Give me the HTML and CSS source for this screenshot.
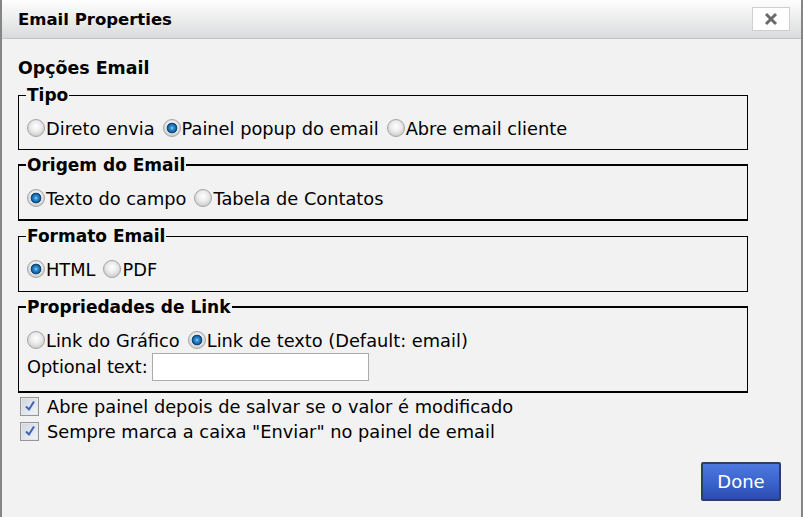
FILE: index.html
```html
<!DOCTYPE html>
<html>
<head>
<meta charset="utf-8">
<link rel="stylesheet" href="styles.css">
</head>
<body>
<div class="dialog">
  <div class="titlebar">
    <span class="title">Email Properties</span>
    <button class="close" type="button" aria-label="Close">
      <svg width="16" height="14" viewBox="0 0 16 14"><path d="M3 2 L13 12 M13 2 L3 12" stroke="#6a6a6a" stroke-width="3" stroke-linecap="butt"/></svg>
    </button>
  </div>
  <div class="content">
    <div class="heading">Opções Email</div>

    <fieldset class="group">
      <legend>Tipo</legend>
      <div class="row">
        <label class="opt"><span class="radio"></span>Direto envia</label>
        <label class="opt"><span class="radio on"></span>Painel popup do email</label>
        <label class="opt"><span class="radio"></span>Abre email cliente</label>
      </div>
    </fieldset>

    <fieldset class="group thick">
      <legend>Origem do Email</legend>
      <div class="row">
        <label class="opt"><span class="radio on"></span>Texto do campo</label>
        <label class="opt"><span class="radio"></span>Tabela de Contatos</label>
      </div>
    </fieldset>

    <fieldset class="group roomy">
      <legend>Formato Email</legend>
      <div class="row">
        <label class="opt"><span class="radio on"></span>HTML</label>
        <label class="opt"><span class="radio"></span>PDF</label>
      </div>
    </fieldset>

    <fieldset class="group thick last">
      <legend>Propriedades de Link</legend>
      <div class="row">
        <label class="opt"><span class="radio"></span>Link do Gráfico</label>
        <label class="opt"><span class="radio on"></span>Link de texto (Default: email)</label>
      </div>
      <div class="row text-row">
        <span class="lbl">Optional text:</span><span class="textbox"></span>
      </div>
    </fieldset>

    <label class="check"><span class="box"><svg width="14" height="14" viewBox="0 0 14 14"><path d="M3 7.5 L6 10.5 L11 2.5" fill="none" stroke="#3f62b8" stroke-width="2"/></svg></span>Abre painel depois de salvar se o valor é modificado</label>
    <label class="check"><span class="box"><svg width="14" height="14" viewBox="0 0 14 14"><path d="M3 7.5 L6 10.5 L11 2.5" fill="none" stroke="#3f62b8" stroke-width="2"/></svg></span>Sempre marca a caixa "Enviar" no painel de email</label>

    <div class="footer">
      <button class="done" type="button">Done</button>
    </div>
  </div>
</div>
</body>
</html>
```

FILE: styles.css
```css
html, body {
  margin: 0;
  padding: 0;
  background: #f2f2f2;
}

.dialog {
  width: 803px;
  height: 517px;
  box-sizing: border-box;
  border-left: 2px solid #858585;
  border-right: 2px solid #858585;
  background: #f2f2f2;
  font-family: "DejaVu Sans", Verdana, sans-serif;
  font-size: 17.8px;
  color: #000;
  display: flex;
  flex-direction: column;
  overflow: hidden;
}

.titlebar {
  height: 39px;
  flex: none;
  box-sizing: border-box;
  border-bottom: 1px solid #c4c4c4;
  background: linear-gradient(#fefefe, #dadbdc);
  display: flex;
  align-items: center;
  justify-content: space-between;
  padding: 0 11px 0 16px;
}

.title {
  font-weight: bold;
  font-size: 16.5px;
}

.close {
  width: 38px;
  height: 24px;
  margin-top: -1px;
  border: 1px solid #cfcfcf;
  background: #fff;
  padding: 0;
  display: flex;
  align-items: center;
  justify-content: center;
}

.content {
  flex: 1;
  padding: 18px 0 0 16px;
  display: flex;
  flex-direction: column;
}

.heading {
  font-weight: bold;
  font-size: 17.4px;
  line-height: 22px;
  margin-bottom: 6px;
}

.group {
  width: 730px;
  box-sizing: border-box;
  margin: 0 0 5px 0;
  padding: 0 8px 10px 8px;
  border: 1px solid #000;
  min-width: 0;
}

.group.thick {
  border-top-width: 2px;
  border-bottom-width: 2px;
}

.group.roomy {
  padding-bottom: 11px;
}

.group.last {
  margin-bottom: 2px;
}

.group legend {
  font-weight: bold;
  font-size: 17px;
  line-height: 20px;
  padding: 0 1px;
  margin-left: -1px;
}

.row {
  margin-top: 12px;
  height: 22px;
  display: flex;
  align-items: center;
  gap: 8px;
  white-space: nowrap;
}

.opt {
  display: flex;
  align-items: center;
}

.radio {
  width: 16px;
  height: 16px;
  border-radius: 50%;
  border: 1px solid #a3a3a3;
  margin-right: 1px;
  background: radial-gradient(circle at 50% 40%, #ffffff 0, #ececec 40%, #cdcdcd 78%, #b8b8b8 100%);
  flex: none;
}

.radio.on {
  background:
    radial-gradient(circle at 50% 50%, #a6dcf8 0, #3996d6 1.5px, #1a6cae 3.5px, #0d3f73 5px, rgba(0,0,0,0) 5.7px),
    radial-gradient(circle at 50% 40%, #ffffff 0, #ececec 40%, #cdcdcd 78%, #b8b8b8 100%);
}

.text-row {
  margin-top: 1px;
  height: 29px;
  gap: 4px;
}

.lbl {
  letter-spacing: -0.1px;
}

.textbox {
  width: 215px;
  height: 26px;
  border: 1px solid #ababab;
  background: #fff;
}

.check {
  display: flex;
  align-items: center;
  height: 22px;
  margin-bottom: 3px;
  white-space: nowrap;
}

.box {
  width: 17px;
  height: 17px;
  margin: 0 8px 0 2px;
  border: 1px solid #969696;
  box-shadow: inset 0 0 0 1px #e4e8ee;
  background: linear-gradient(135deg, #cfd5de, #f3f5f8);
  display: flex;
  align-items: center;
  justify-content: center;
  flex: none;
}

.footer {
  display: flex;
  justify-content: flex-end;
  padding-right: 20px;
  margin-top: 17px;
}

.done {
  width: 80px;
  height: 39px;
  border: 2px solid #2b3f63;
  border-radius: 2px;
  background: linear-gradient(#4d79dc, #3a63cc 55%, #2b4cb0);
  color: #fff;
  font-family: "DejaVu Sans", Verdana, sans-serif;
  font-size: 18px;
  padding: 0;
}
```
